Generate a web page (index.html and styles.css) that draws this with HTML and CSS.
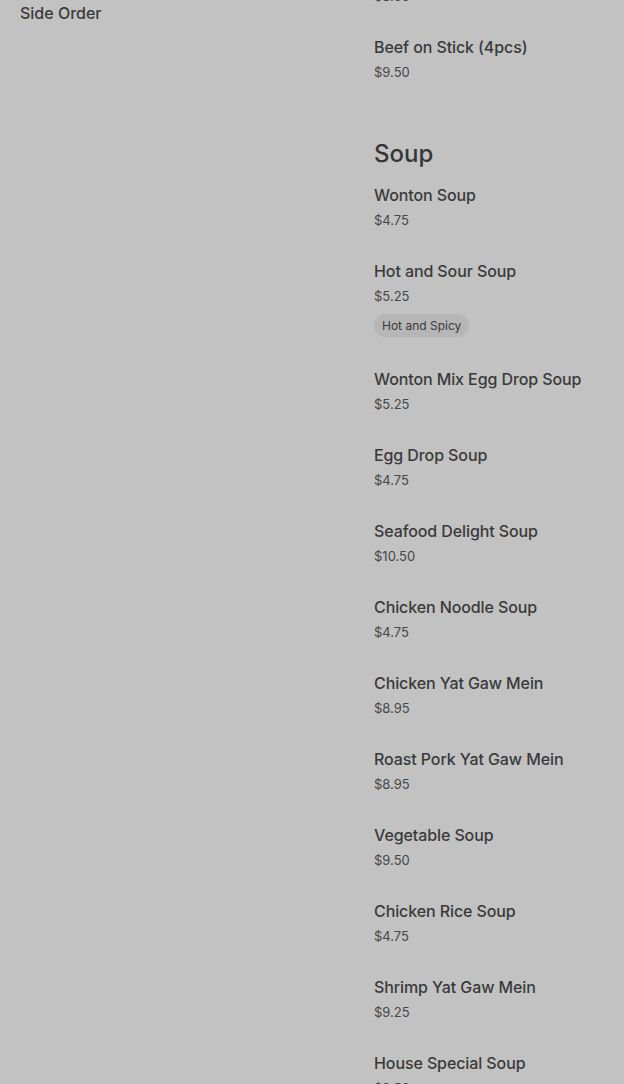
FILE: index.html
```html
<!DOCTYPE html>
<html lang="en">
<head>
<meta charset="utf-8">
<title>Menu</title>
<link rel="stylesheet" href="styles.css">
</head>
<body>
<div class="page">
  <nav class="sidebar">
    <a class="nav-link">Side Order</a>
  </nav>
  <main class="menu">
    <ul class="items items-first">
      <li class="item"><div class="name">Chicken on Stick (4pcs)</div><div class="price">$8.50</div></li>
      <li class="item"><div class="name">Beef on Stick (4pcs)</div><div class="price">$9.50</div></li>
    </ul>
    <section class="section">
      <h2 class="heading">Soup</h2>
      <ul class="items">
        <li class="item"><div class="name">Wonton Soup</div><div class="price">$4.75</div></li>
        <li class="item"><div class="name">Hot and Sour Soup</div><div class="price">$5.25</div><div class="tags"><span class="tag">Hot and Spicy</span></div></li>
        <li class="item"><div class="name">Wonton Mix Egg Drop Soup</div><div class="price">$5.25</div></li>
        <li class="item"><div class="name">Egg Drop Soup</div><div class="price">$4.75</div></li>
        <li class="item"><div class="name">Seafood Delight Soup</div><div class="price">$10.50</div></li>
        <li class="item"><div class="name">Chicken Noodle Soup</div><div class="price">$4.75</div></li>
        <li class="item"><div class="name">Chicken Yat Gaw Mein</div><div class="price">$8.95</div></li>
        <li class="item"><div class="name">Roast Pork Yat Gaw Mein</div><div class="price">$8.95</div></li>
        <li class="item"><div class="name">Vegetable Soup</div><div class="price">$9.50</div></li>
        <li class="item"><div class="name">Chicken Rice Soup</div><div class="price">$4.75</div></li>
        <li class="item"><div class="name">Shrimp Yat Gaw Mein</div><div class="price">$9.25</div></li>
        <li class="item"><div class="name">House Special Soup</div><div class="price">$9.50</div></li>
      </ul>
    </section>
  </main>
</div>
</body>
</html>
```

FILE: styles.css
```css
html, body {
  margin: 0;
  padding: 0;
  background: #c2c2c2;
  height: 100%;
  overflow: hidden;
}
body {
  font-family: Inter, "Noto Sans", "Liberation Sans", sans-serif;
  color: #3a3a3a;
}
.page {
  display: flex;
  padding: 0 0 0 20px;
}
.sidebar {
  width: 354px;
  flex: none;
  padding-top: 1px;
}
.nav-link {
  display: block;
  font-size: 16px;
  line-height: 24px;
  font-weight: 500;
  color: #3a3a3a;
}
.menu {
  flex: 1;
  min-width: 0;
}
.items {
  list-style: none;
  margin: 0;
  padding: 0;
}
.items-first {
  margin-top: -57px;
}
.item {
  padding: 16px 0 13px;
}
.name {
  font-size: 16px;
  line-height: 24px;
  font-weight: 500;
  letter-spacing: -0.1px;
  color: #3a3a3a;
  white-space: nowrap;
}
.price {
  margin-top: 3px;
  font-size: 13px;
  line-height: 20px;
  font-weight: 400;
  color: #474747;
}
.tags {
  display: flex;
  gap: 8px;
  margin-top: 8px;
  margin-bottom: 1px;
}
.tag {
  display: inline-flex;
  align-items: center;
  height: 23px;
  padding: 0 8px;
  border-radius: 12px;
  background: #b6b6b6;
  font-size: 12px;
  color: #3a3a3a;
}
.section {
  margin-top: 46px;
}
.heading {
  margin: 0;
  font-size: 24px;
  line-height: 26px;
  font-weight: 500;
  color: #363636;
}
```
